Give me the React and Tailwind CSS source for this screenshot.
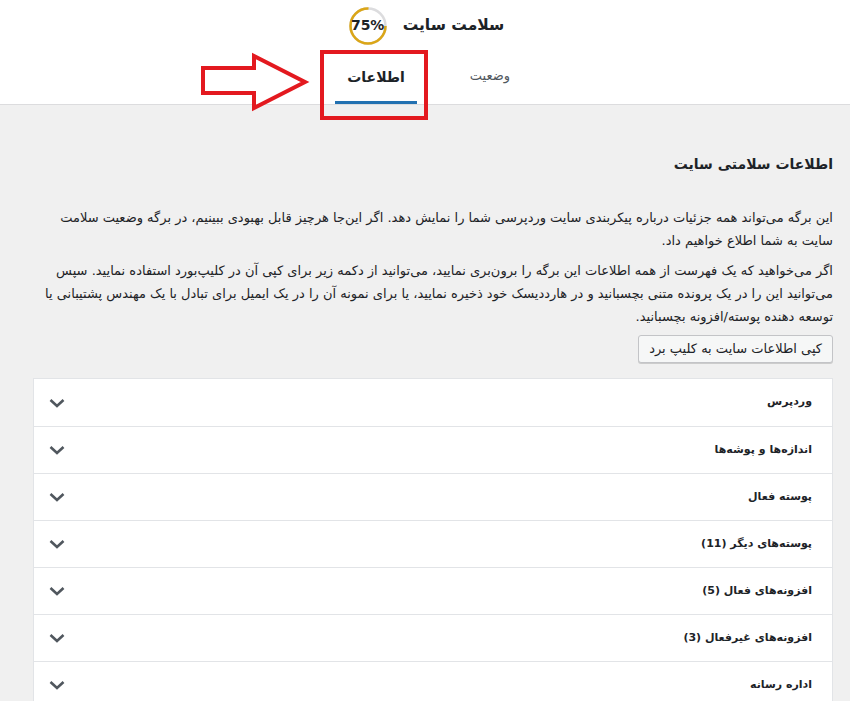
import React from 'react'

const sections = [
    'وردپرس',
    'اندازه‌ها و پوشه‌ها',
    'پوسته فعال',
    'پوسته‌های دیگر (11)',
    'افزونه‌های فعال (5)',
    'افزونه‌های غیرفعال (3)',
    'اداره رسانه',
]

function ScoreCircle() {
    return (
        <div className="relative w-[40px] h-[40px] flex items-center justify-center">
            <svg width="40" height="40" viewBox="0 0 40 40" className="absolute inset-0">
                <circle cx="20" cy="20" r="17.5" fill="none" stroke="#dcdcde" strokeWidth="2.5" />
                <circle
                    cx="20" cy="20" r="17.5" fill="none" stroke="#dba617" strokeWidth="2.5"
                    strokeDasharray="82.47 109.96"
                />
            </svg>
            <span className="relative text-[14px] font-bold text-[#1d2327]" dir="ltr">75%</span>
        </div>
    )
}

function Chevron() {
    return (
        <svg width="18" height="12" viewBox="0 0 18 12">
            <path d="M2.5 3 L9 9 L15.5 3" fill="none" stroke="#50575e" strokeWidth="2.6" />
        </svg>
    )
}

function Arrow() {
    return (
        <svg width="112" height="60" viewBox="0 0 112 60" className="absolute left-[199px] top-[52px]">
            <path
                d="M4 16 L55 16 L55 4 L106 30 L55 56 L55 41 L4 41 Z"
                fill="none" stroke="#e3191f" strokeWidth="4" strokeLinejoin="miter"
            />
        </svg>
    )
}

export default function App() {
    return (
        <div dir="rtl" className="relative min-h-[701px] bg-[#f0f0f0] text-[#1d2327]" style={{ fontFamily: '"DejaVu Sans", Tahoma, sans-serif' }}>
            {/* Header */}
            <header className="bg-white border-b border-[#dcdcde] h-[105px] flex flex-col items-center">
                <div className="flex items-center gap-[15px] h-[50px] pt-[1px] pl-[2px]">
                    <h1 className="text-[15.5px] font-bold">سلامت سایت</h1>
                    <ScoreCircle />
                </div>
                <nav className="flex justify-center gap-[32px] pl-[16px] h-[54px]">
                    <a className="w-[82px] flex items-center justify-center text-[13px] text-[#50575e] pb-[2px]">وضعیت</a>
                    <a className="w-[82px] flex items-center justify-center text-[14px] font-semibold border-b-[3px] border-[#2271b1] pt-[3px]">اطلاعات</a>
                </nav>
            </header>

            {/* Annotation overlay */}
            <div className="absolute left-[320px] top-[50px] w-[108px] h-[70px] border-[4px] border-[#e3191f]" />
            <Arrow />

            {/* Body */}
            <main className="px-[17px] pt-[47px]">
                <h2 className="text-[14px] font-bold leading-[24px]">اطلاعات سلامتی سایت</h2>
                <p className="text-[13px] leading-[23px] mt-[30px] whitespace-nowrap">
                    این برگه می‌تواند همه جزئیات درباره پیکربندی سایت وردپرسی شما را نمایش دهد. اگر این‌جا هرچیز قابل بهبودی ببینیم، در برگه وضعیت سلامت<br />
                    سایت به شما اطلاع خواهیم داد.
                </p>
                <p className="text-[13px] leading-[23px] mt-[7px] whitespace-nowrap">
                    اگر می‌خواهید که یک فهرست از همه اطلاعات این برگه را برون‌بری نمایید، می‌توانید از دکمه زیر برای کپی آن در کلیپ‌بورد استفاده نمایید. سپس<br />
                    می‌توانید این را در یک پرونده متنی بچسبانید و در هارددیسک خود ذخیره نمایید، یا برای نمونه آن را در یک ایمیل برای تبادل با یک مهندس پشتیبانی یا<br />
                    توسعه دهنده پوسته/افزونه بچسبانید.
                </p>
                <div className="mt-[7px]">
                    <button className="h-[28px] px-[10px] text-[13px] bg-[#f6f7f7] border border-[#c3c4c7] rounded-[3px] shadow-[0_1px_0_#ccc]">
                        کپی اطلاعات سایت به کلیپ برد
                    </button>
                </div>

                <div className="w-[800px] mt-[15px] border border-[#e2e4e7] bg-white">
                    {sections.map((title, i) => (
                        <div
                            key={title}
                            className={`h-[47px] flex items-center justify-between pr-[20px] pl-[14px] ${i > 0 ? 'border-t border-[#e2e4e7]' : ''}`}
                        >
                            <span className="text-[11px] font-bold">{title}</span>
                            <Chevron />
                        </div>
                    ))}
                </div>
            </main>
        </div>
    )
}
